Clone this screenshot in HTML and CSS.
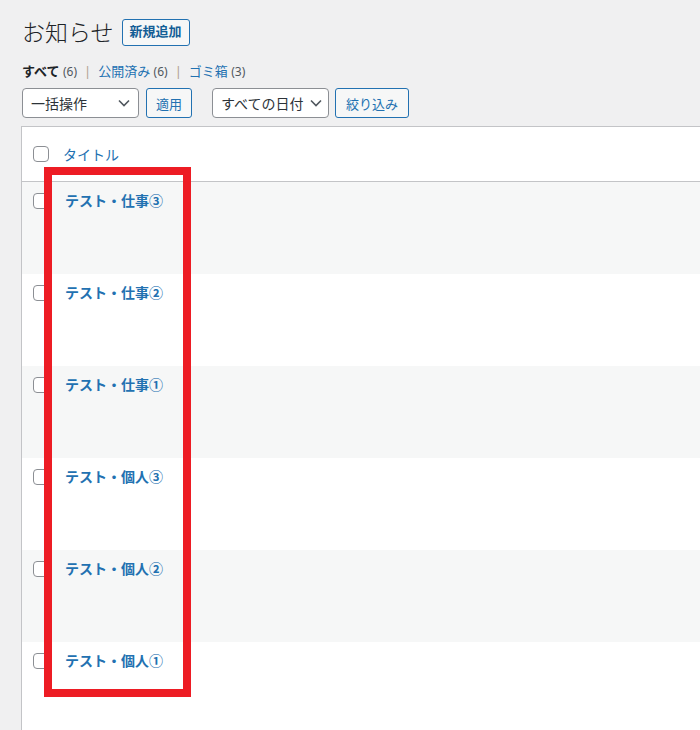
FILE: index.html
```html
<!DOCTYPE html>
<html lang="ja">
<head>
    <meta charset="UTF-8">
    <meta name="viewport" content="width=device-width, initial-scale=1.0">
    <title>お知らせ</title>
    <link rel="stylesheet" href="styles.css">
</head>
<body>
    <div class="wrap">
        <div class="page-head">
            <h1 class="page-title">お知らせ</h1>
            <a class="add-new" href="#">新規追加</a>
        </div>

        <ul class="subsubsub">
            <li class="current">すべて <span class="count">(6)</span></li>
            <li class="sep">|</li>
            <li><a href="#">公開済み</a> <span class="count">(6)</span></li>
            <li class="sep">|</li>
            <li><a href="#">ゴミ箱</a> <span class="count">(3)</span></li>
        </ul>

        <div class="tablenav">
            <div class="select bulk">
                <span>一括操作</span>
                <svg class="chevron" width="12" height="8" viewBox="0 0 12 8"><path d="M1 1.5l5 5 5-5" fill="none" stroke="#50575e" stroke-width="1.6"/></svg>
            </div>
            <button class="button">適用</button>
            <div class="select dates">
                <span>すべての日付</span>
                <svg class="chevron" width="12" height="8" viewBox="0 0 12 8"><path d="M1 1.5l5 5 5-5" fill="none" stroke="#50575e" stroke-width="1.6"/></svg>
            </div>
            <button class="button wide">絞り込み</button>
        </div>
    </div>

    <div class="list-table">
        <div class="table-head">
            <span class="check"></span>
            <a class="col-title" href="#">タイトル</a>
        </div>
        <div class="row alt">
            <span class="check"></span>
            <a class="row-title" href="#">テスト・仕事③</a>
        </div>
        <div class="row">
            <span class="check"></span>
            <a class="row-title" href="#">テスト・仕事②</a>
        </div>
        <div class="row alt">
            <span class="check"></span>
            <a class="row-title" href="#">テスト・仕事①</a>
        </div>
        <div class="row">
            <span class="check"></span>
            <a class="row-title" href="#">テスト・個人③</a>
        </div>
        <div class="row alt">
            <span class="check"></span>
            <a class="row-title" href="#">テスト・個人②</a>
        </div>
        <div class="row">
            <span class="check"></span>
            <a class="row-title" href="#">テスト・個人①</a>
        </div>
    </div>

    <!-- annotation drawn over the title column -->
    <div class="highlight"></div>
</body>
</html>
```

FILE: styles.css
```css
* {
    margin: 0;
    padding: 0;
    box-sizing: border-box;
}

body {
    font-family: "Noto Sans", "Noto Sans CJK JP", sans-serif;
    font-size: 13px;
    background: #f0f0f1;
    color: #3c434a;
    position: relative;
    overflow: hidden;
    height: 730px;
}

a {
    color: #2271b1;
    text-decoration: none;
}

.wrap {
    padding-left: 22px;
}

.page-head {
    display: flex;
    align-items: center;
    gap: 8px;
    padding-top: 17px;
    height: 47px;
}

.page-title {
    font-size: 23px;
    font-weight: 300;
    line-height: 30px;
    color: #1d2327;
}

.add-new {
    display: inline-block;
    height: 27px;
    line-height: 23px;
    padding: 0 7px;
    border: 1px solid #2271b1;
    border-radius: 3px;
    background: #f6f7f7;
    font-size: 13px;
    font-weight: 600;
    color: #135e96;
}

.subsubsub {
    list-style: none;
    display: flex;
    gap: 7px;
    margin-top: 13px;
    height: 22px;
    line-height: 22px;
    font-size: 13px;
}

.subsubsub .current {
    font-weight: 700;
    color: #1d2327;
}

.subsubsub .count {
    font-weight: 400;
    color: #50575e;
    font-size: 12px;
}

.subsubsub .sep {
    color: #b0a090;
}

.tablenav {
    display: flex;
    align-items: center;
    gap: 7px;
    margin-top: 6px;
    height: 30px;
}

.select {
    display: flex;
    align-items: center;
    justify-content: space-between;
    height: 30px;
    padding: 0 8px;
    border: 1px solid #8c8f94;
    border-radius: 4px;
    background: #fff;
    font-size: 14px;
    color: #2c3338;
}

.select.bulk {
    width: 117px;
}

.select.dates {
    width: 117px;
    margin-left: 13px;
    padding-right: 6px;
}

.button {
    height: 30px;
    padding: 0 9px;
    border: 1px solid #2271b1;
    border-radius: 3px;
    background: #f6f7f7;
    font-family: inherit;
    font-size: 13px;
    color: #2271b1;
}

.button.wide {
    margin-left: -1px;
    width: 74px;
    padding: 0;
}

.list-table {
    margin: 8px -20px 0 21px;
    background: #fff;
    border: 1px solid #c3c4c7;
    border-bottom: none;
}

.table-head {
    display: flex;
    align-items: center;
    height: 55px;
    padding-left: 11px;
    border-bottom: 1px solid #c3c4c7;
}

.check {
    display: inline-block;
    width: 16px;
    height: 16px;
    border: 1px solid #8c8f94;
    border-radius: 4px;
    background: #fff;
    flex-shrink: 0;
}

.col-title {
    margin-left: 14px;
    font-size: 14px;
    margin-bottom: 1px;
}

.row {
    display: flex;
    align-items: flex-start;
    height: 92px;
    padding: 10px 0 0 11px;
}

.row.alt {
    background: #f6f7f7;
}

.row .check {
    margin-top: 1px;
}

.row-title {
    margin-left: 16px;
    font-size: 14px;
    font-weight: 600;
    line-height: 18px;
}

.highlight {
    position: absolute;
    left: 44px;
    top: 167px;
    width: 147px;
    height: 530px;
    border: 8px solid #ed1c24;
}
```
